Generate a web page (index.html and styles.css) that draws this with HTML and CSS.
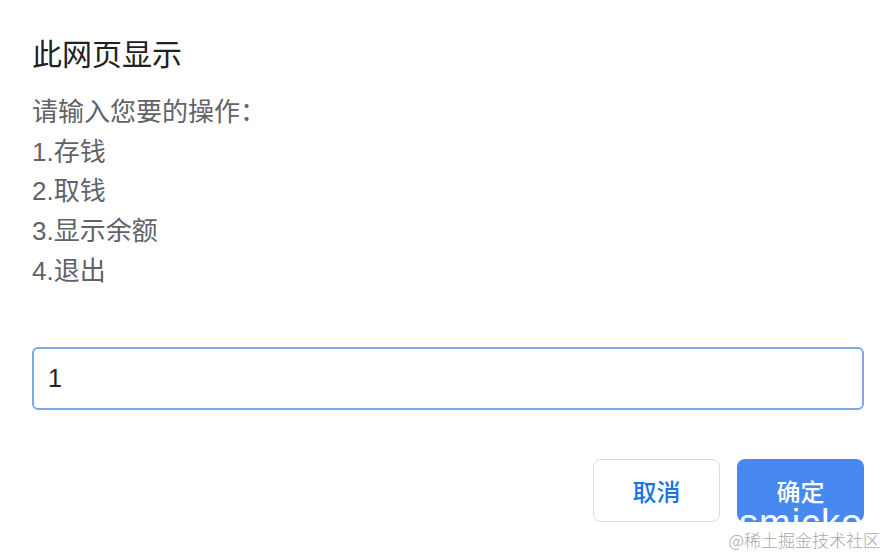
FILE: index.html
```html
<!DOCTYPE html>
<html lang="zh">
<head>
<meta charset="utf-8">
<link rel="stylesheet" href="styles.css">
</head>
<body>
<div class="dialog">
  <h1 class="title">此网页显示</h1>
  <div class="message">
    <div class="line">请输入您要的操作：</div>
    <div class="line">1.存钱</div>
    <div class="line">2.取钱</div>
    <div class="line">3.显示余额</div>
    <div class="line">4.退出</div>
  </div>
  <input class="field" type="text" value="1">
  <div class="actions">
    <button class="btn btn-cancel">取消</button>
    <button class="btn btn-ok">确定<span class="ghost">smicko</span></button>
  </div>
</div>
<div class="mark">@稀土掘金技术社区</div>
</body>
</html>
```
FILE: styles.css
```css
html, body {
  margin: 0;
  padding: 0;
  background: #ffffff;
}
body {
  width: 896px;
  height: 556px;
  overflow: hidden;
  position: relative;
  font-family: "Liberation Sans", "Noto Sans CJK SC", sans-serif;
}
.dialog {
  padding: 35px 32px 0 32px;
  display: flex;
  flex-direction: column;
}
.title {
  margin: 0;
  font-size: 30px;
  font-weight: 400;
  line-height: 40px;
  color: #202124;
}
.message {
  margin-top: 18px;
  font-size: 26px;
  line-height: 39.7px;
  color: #606368;
}
.field {
  margin-top: 55px;
  box-sizing: border-box;
  width: 832px;
  height: 63px;
  border: 2px solid #7fa8ec;
  border-radius: 6px;
  padding: 0 14px;
  font-family: "Liberation Sans", sans-serif;
  font-size: 25px;
  color: #202124;
  outline: none;
  background: #fff;
}
.actions {
  margin-top: 49px;
  display: flex;
  justify-content: flex-end;
  gap: 17px;
}
.btn {
  box-sizing: border-box;
  width: 127px;
  height: 63px;
  border-radius: 8px;
  font-family: "Noto Sans CJK SC", sans-serif;
  font-size: 24px;
  font-weight: 500;
  padding: 0;
  position: relative;
  overflow: hidden;
}
.btn-cancel {
  background: #fff;
  border: 1px solid #dadce0;
  color: #1a73e8;
}
.btn-ok {
  background: #4889f1;
  border: none;
  color: #fff;
}
.ghost {
  position: absolute;
  left: 2px;
  top: 45px;
  font-family: "Liberation Sans", sans-serif;
  font-size: 38px;
  line-height: 38px;
  font-weight: 400;
  letter-spacing: 1px;
  color: #fff;
  white-space: nowrap;
}
.mark {
  position: absolute;
  right: 16px;
  top: 527px;
  font-family: "Noto Sans CJK SC", sans-serif;
  font-weight: 300;
  font-size: 17px;
  color: #a8a8a8;
  line-height: 26px;
}
```
